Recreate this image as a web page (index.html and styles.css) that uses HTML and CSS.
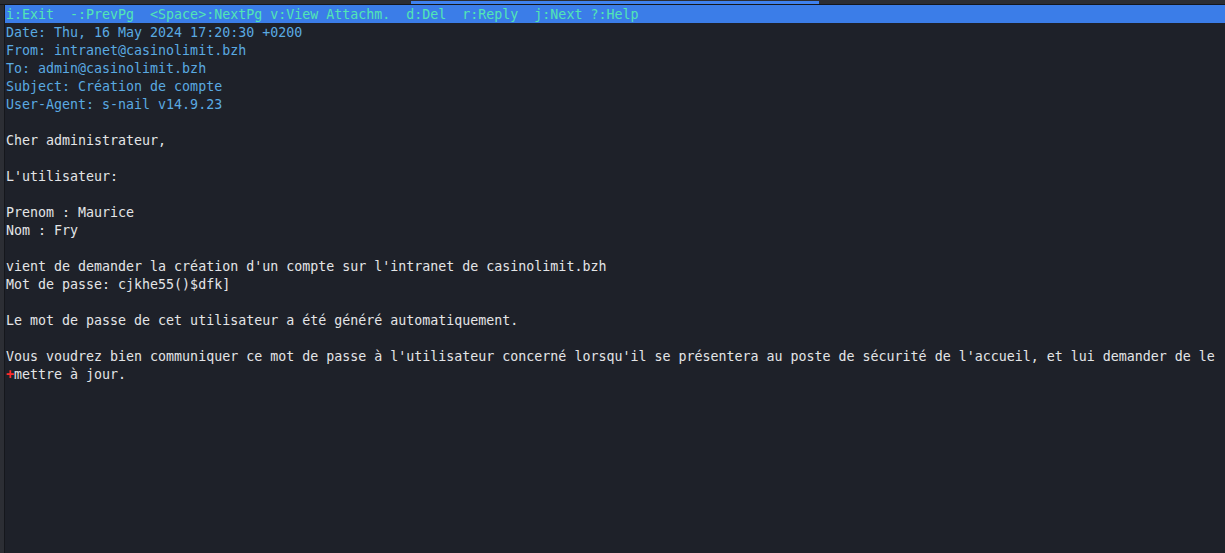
FILE: index.html
```html
<!DOCTYPE html>
<html>
<head>
<meta charset="utf-8">
<link rel="stylesheet" href="styles.css">
</head>
<body>
<div class="topstrip"><div class="tab"></div></div>
<div class="main">
  <div class="gutter"></div>
  <div class="term">
    <div class="line status">i:Exit  -:PrevPg  &lt;Space&gt;:NextPg v:View Attachm.  d:Del  r:Reply  j:Next ?:Help</div>
    <div class="line hdr">Date: Thu, 16 May 2024 17:20:30 +0200</div>
    <div class="line hdr">From: intranet@casinolimit.bzh</div>
    <div class="line hdr">To: admin@casinolimit.bzh</div>
    <div class="line hdr">Subject: Création de compte</div>
    <div class="line hdr">User-Agent: s-nail v14.9.23</div>
    <div class="line"> </div>
    <div class="line">Cher administrateur,</div>
    <div class="line"> </div>
    <div class="line">L'utilisateur:</div>
    <div class="line"> </div>
    <div class="line">Prenom : Maurice</div>
    <div class="line">Nom : Fry</div>
    <div class="line"> </div>
    <div class="line">vient de demander la création d'un compte sur l'intranet de casinolimit.bzh</div>
    <div class="line">Mot de passe: cjkhe55()$dfk]</div>
    <div class="line"> </div>
    <div class="line">Le mot de passe de cet utilisateur a été généré automatiquement.</div>
    <div class="line"> </div>
    <div class="line">Vous voudrez bien communiquer ce mot de passe à l'utilisateur concerné lorsqu'il se présentera au poste de sécurité de l'accueil, et lui demander de le</div>
    <div class="line"><span class="wrap">+</span>mettre à jour.</div>
  </div>
</div>
</body>
</html>
```
FILE: styles.css
```css
html, body {
  margin: 0;
  padding: 0;
  width: 1225px;
  height: 553px;
  overflow: hidden;
  background: #1e2129;
}
.topstrip {
  height: 4px;
  background: #2c2e34;
  border-bottom: 1px solid #15171c;
  position: relative;
}
.tab {
  position: absolute;
  left: 411px;
  top: 1px;
  width: 408px;
  height: 3px;
  background: #3f82f0;
}
.main {
  display: flex;
  height: 548px;
}
.gutter {
  width: 4px;
  background: #2c2e34;
  border-right: 1px solid #15171c;
  flex: none;
}
.term {
  flex: 1;
  font-family: "DejaVu Sans Mono", monospace;
  font-size: 13.3px;
  line-height: 18px;
  color: #e4e5e7;
}
.line {
  height: 17px;
  padding-top: 1px;
  padding-left: 1px;
  white-space: pre;
}
.status {
  background: #3b7de8;
  color: #52e6b4;
}
.hdr {
  color: #5aaae2;
}
.wrap {
  color: #ff2a2a;
  font-weight: bold;
}
```
